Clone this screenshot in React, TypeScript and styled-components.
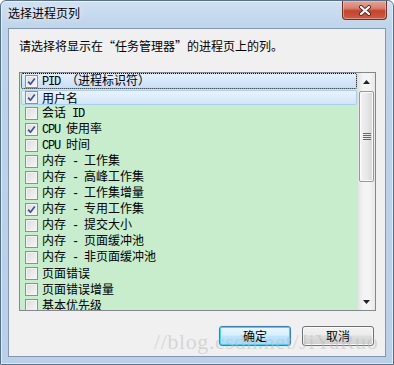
import React from "react";
import styled, { createGlobalStyle } from "styled-components";

const CJK = `"Noto Sans CJK SC", "Liberation Sans", sans-serif`;
const MONO = `"Liberation Mono", "Noto Sans CJK SC", monospace`;

interface Column {
  label: string;
  checked: boolean;
}

const columns: Column[] = [
  { label: "PID （进程标识符）", checked: true },
  { label: "用户名", checked: true },
  { label: "会话 ID", checked: false },
  { label: "CPU 使用率", checked: true },
  { label: "CPU 时间", checked: false },
  { label: "内存 - 工作集", checked: false },
  { label: "内存 - 高峰工作集", checked: false },
  { label: "内存 - 工作集增量", checked: false },
  { label: "内存 - 专用工作集", checked: true },
  { label: "内存 - 提交大小", checked: false },
  { label: "内存 - 页面缓冲池", checked: false },
  { label: "内存 - 非页面缓冲池", checked: false },
  { label: "页面错误", checked: false },
  { label: "页面错误增量", checked: false },
  { label: "基本优先级", checked: false },
];

const GlobalStyle = createGlobalStyle`
  html, body {
    margin: 0;
    padding: 0;
    background: #ffffff;
  }
`;

const Window = styled.div`
  position: relative;
  width: 394px;
  height: 365px;
  box-sizing: border-box;
  border: 1px solid #56708a;
  border-radius: 6px 6px 0 0;
  background: linear-gradient(
    180deg,
    #cfe0f1 0px,
    #bcd3ea 30px,
    #b9d0e8 100%
  );
  box-shadow: inset 0 0 0 1px rgba(255, 255, 255, 0.55);
  padding: 0 7px 7px 7px;
  display: flex;
  flex-direction: column;
  overflow: hidden;
`;

const TitleBar = styled.div`
  height: 28px;
  display: flex;
  align-items: flex-start;
  justify-content: space-between;
`;

const Title = styled.div`
  font-family: ${CJK};
  font-size: 12px;
  line-height: 14px;
  color: #000;
  padding-top: 5px;
  text-shadow: 0 0 6px rgba(255, 255, 255, 0.9);
`;

const CloseButton = styled.div`
  width: 45px;
  height: 19px;
  margin-right: -1px;
  box-sizing: border-box;
  border: 1px solid #6e3027;
  border-top: none;
  border-radius: 0 0 4px 4px;
  background: linear-gradient(
    180deg,
    #e6a396 0%,
    #d9806e 40%,
    #c2432c 55%,
    #cf5c40 100%
  );
  box-shadow: inset 0 0 0 1px rgba(255, 200, 190, 0.5);
  display: flex;
  align-items: center;
  justify-content: center;
`;

const Client = styled.div`
  flex: 1;
  background: #f0f0f0;
  border: 1px solid #8497ad;
  padding: 9px 10px 10px 10px;
  display: flex;
  flex-direction: column;
`;

const Prompt = styled.div`
  font-family: ${CJK};
  font-size: 12px;
  line-height: 16px;
  color: #000;
`;

const ListBox = styled.div`
  margin-top: 18px;
  height: 239px;
  width: 357px;
  box-sizing: border-box;
  border: 1px solid #828790;
  background: #c7edcc;
  display: flex;
  overflow: hidden;
`;

const Rows = styled.div`
  flex: 1;
  padding: 0 1px;
  overflow: hidden;
`;

const Row = styled.div<{ $state: "focus" | "hover" | "none" }>`
  height: 16px;
  box-sizing: border-box;
  display: flex;
  align-items: center;
  padding-left: 4px;
  gap: 4px;
  border-radius: 2px;
  font-family: ${CJK};
  font-size: 12px;
  color: #000;
  ${(p) =>
    p.$state === "focus" &&
    `
    border: 1px dotted #000;
    background: linear-gradient(180deg, #e3effd 0%, #c9def7 100%);
    padding-left: 3px;
  `}
  ${(p) =>
    p.$state === "hover" &&
    `
    border: 1px solid #a9cfee;
    background: linear-gradient(180deg, #e8f3fd 0%, #d2e6f8 100%);
    padding-left: 3px;
    margin-top: 1px;
    height: 15px;
  `}
`;

const Box = styled.div`
  width: 13px;
  height: 13px;
  flex: none;
  box-sizing: border-box;
  border: 1px solid #8e8f8f;
  background: linear-gradient(135deg, #dcdcdc 0%, #f6f6f6 100%);
  box-shadow: inset 0 0 0 1px #f4f4f4;
  display: flex;
  align-items: center;
  justify-content: center;
`;

const Label = styled.span`
  white-space: pre;
  line-height: 14px;
`;

const Latin = styled.span`
  font-family: ${MONO};
  letter-spacing: -1.2px;
`;

const ScrollBar = styled.div`
  width: 17px;
  flex: none;
  background: linear-gradient(90deg, #e3e3e3 0%, #f4f4f4 30%, #f4f4f4 70%, #e8e8e8 100%);
  display: flex;
  flex-direction: column;
`;

const Arrow = styled.div`
  height: 17px;
  display: flex;
  align-items: center;
  justify-content: center;
`;

const Track = styled.div`
  flex: 1;
  padding-top: 1px;
`;

const Thumb = styled.div`
  margin: 0 1px;
  height: 91px;
  box-sizing: border-box;
  border: 1px solid #979797;
  border-radius: 2px;
  background: linear-gradient(90deg, #f4f4f4 0%, #e8e8e8 50%, #d6d6d6 100%);
  box-shadow: inset 0 0 0 1px #fbfbfb;
  display: flex;
  align-items: center;
  justify-content: center;
`;

const ButtonRow = styled.div`
  margin-top: 15px;
  display: flex;
  justify-content: flex-end;
  gap: 11px;
  padding-right: 1px;
`;

const Button = styled.div<{ $default?: boolean }>`
  width: 72px;
  height: 20px;
  box-sizing: border-box;
  border-radius: 3px;
  border: 1px solid ${(p) => (p.$default ? "#3c7fb1" : "#707070")};
  background: ${(p) =>
    p.$default
      ? "linear-gradient(180deg, #eaf6fd 0%, #d9f0fc 45%, #bee6fd 50%, #a7d9f5 100%)"
      : "linear-gradient(180deg, #f2f2f2 0%, #ebebeb 45%, #dddddd 50%, #cfcfcf 100%)"};
  box-shadow: ${(p) =>
    p.$default
      ? "inset 0 0 0 1px #48d0f8, 0 0 1px #48d0f8"
      : "inset 0 0 0 1px #fafafa"};
  font-family: ${CJK};
  font-size: 12px;
  line-height: 18px;
  text-align: center;
  color: #000;
`;

const Watermark = styled.div`
  position: absolute;
  left: 153px;
  top: 328px;
  font-family: "Liberation Serif", serif;
  font-size: 22px;
  letter-spacing: 0.6px;
  color: rgba(190, 190, 190, 0.55);
  pointer-events: none;
  white-space: nowrap;
`;

const renderLabel = (text: string) =>
  text.split(/([A-Za-z\- ]+)/).map((part, i) =>
    /[A-Za-z\- ]/.test(part) ? <Latin key={i}>{part}</Latin> : <span key={i}>{part}</span>
  );

const CheckMark = () => (
  <svg width="11" height="11" viewBox="0 0 11 11">
    <path
      d="M2.2 5.6 L4.4 8.2 L8.8 2.4"
      fill="none"
      stroke="#3d5393"
      strokeWidth="1.7"
      strokeLinejoin="round"
    />
  </svg>
);

export default function App() {
  return (
    <>
      <GlobalStyle />
      <Window>
        <TitleBar>
          <Title>选择进程页列</Title>
          <CloseButton>
            <svg width="14" height="11" viewBox="0 0 14 11">
              <path d="M3 2 L11 9 M11 2 L3 9" stroke="#5a2a22" strokeWidth="4" strokeLinecap="round" />
              <path d="M3 2 L11 9 M11 2 L3 9" stroke="#ffffff" strokeWidth="2.2" strokeLinecap="round" />
            </svg>
          </CloseButton>
        </TitleBar>
        <Client>
          <Prompt>请选择将显示在“任务管理器”的进程页上的列。</Prompt>
          <ListBox>
            <Rows>
              {columns.map((c, i) => (
                <Row key={c.label} $state={i === 0 ? "focus" : i === 1 ? "hover" : "none"}>
                  <Box>{c.checked && <CheckMark />}</Box>
                  <Label>{renderLabel(c.label)}</Label>
                </Row>
              ))}
            </Rows>
            <ScrollBar>
              <Arrow>
                <svg width="7" height="4" viewBox="0 0 7 4">
                  <path d="M0 4 L3.5 0 L7 4 Z" fill="#222" />
                </svg>
              </Arrow>
              <Track>
                <Thumb>
                  <svg width="8" height="8" viewBox="0 0 8 8">
                    <path d="M0 0.5 H8 M0 2.5 H8 M0 4.5 H8 M0 6.5 H8" stroke="#666" strokeWidth="1" />
                  </svg>
                </Thumb>
              </Track>
              <Arrow>
                <svg width="7" height="4" viewBox="0 0 7 4">
                  <path d="M0 0 L3.5 4 L7 0 Z" fill="#222" />
                </svg>
              </Arrow>
            </ScrollBar>
          </ListBox>
          <ButtonRow>
            <Button $default>确定</Button>
            <Button>取消</Button>
          </ButtonRow>
        </Client>
        <Watermark>//blog.csdn.net/JiYaRuo</Watermark>
      </Window>
    </>
  );
}
